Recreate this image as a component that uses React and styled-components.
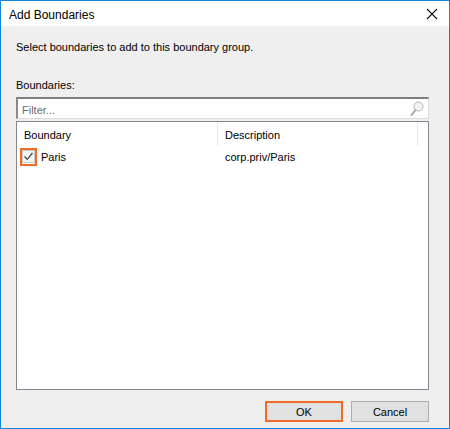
import React, { useState } from "react";
import styled, { createGlobalStyle } from "styled-components";

const GlobalStyle = createGlobalStyle`
  html, body {
    margin: 0;
    padding: 0;
    background: #ffffff;
  }
  * {
    box-sizing: border-box;
  }
`;

const Window = styled.div`
  width: 450px;
  height: 429px;
  border: 1px solid #1883d7;
  display: flex;
  flex-direction: column;
  background: #efefef;
  font-family: "Liberation Sans", Arial, sans-serif;
  font-size: 11px;
  color: #000;
`;

const TitleBar = styled.div`
  height: 30px;
  background: #ffffff;
  display: flex;
  align-items: center;
  justify-content: space-between;
  padding: 0 11px 0 8px;
`;

const Title = styled.span`
  font-size: 12px;
  padding-top: 3px;
`;

const CloseButton = styled.button`
  border: none;
  background: none;
  padding: 0;
  width: 12px;
  height: 12px;
  display: flex;
  cursor: pointer;
`;

const Body = styled.div`
  flex: 1;
  display: flex;
  flex-direction: column;
  padding: 15px 20px 6px 15px;
`;

const Instruction = styled.div`
  height: 13px;
  line-height: 13px;
`;

const FieldLabel = styled.div`
  margin-top: 25px;
  height: 13px;
  line-height: 13px;
`;

const FilterBox = styled.div`
  margin-top: 5px;
  height: 22px;
  background: #ffffff;
  border-top: 2px solid #7f7f7f;
  border-left: 2px solid #8a8a8a;
  border-right: 1px solid #dcdcdc;
  border-bottom: 1px solid #dcdcdc;
  display: flex;
  align-items: center;
  padding: 1px 4px 0 4px;
`;

const FilterInput = styled.input`
  flex: 1;
  border: none;
  outline: none;
  background: transparent;
  font-family: "Liberation Sans", Arial, sans-serif;
  font-size: 11px;
  padding: 1px 0 0;
  color: #000;
  &::placeholder {
    color: #6d6d6d;
  }
`;

const ListView = styled.div`
  margin-top: 2px;
  height: 269px;
  background: #ffffff;
  border: 1px solid #828790;
  display: flex;
  flex-direction: column;
`;

const HeaderRow = styled.div`
  display: grid;
  grid-template-columns: 201px 200px 1fr;
  height: 24px;
`;

const HeaderCell = styled.div`
  display: flex;
  align-items: center;
  padding-left: 7px;
  border-right: ${(p) => (p.$last ? "none" : "1px solid #e5e5e5")};
  margin: 1px 0 0;
`;

const Row = styled.div`
  display: grid;
  grid-template-columns: 201px 1fr;
  height: 19px;
  margin-top: 1px;
`;

const Cell = styled.div`
  display: flex;
  align-items: center;
  gap: 4px;
  padding-left: ${(p) => p.$pad}px;
`;

const CheckFrame = styled.span`
  width: 17px;
  height: 18px;
  border: 2px solid #f26b24;
  display: flex;
  align-items: center;
  justify-content: center;
  background: #ffffff;
`;

const CheckBox = styled.span`
  width: 13px;
  height: 13px;
  border: 1px solid #c9c9c9;
  background: #f5f5f5;
  display: flex;
  align-items: center;
  justify-content: center;
`;

const Footer = styled.div`
  margin-top: 11px;
  display: flex;
  justify-content: flex-end;
  gap: 8px;
`;

const Button = styled.button`
  width: 78px;
  height: 21px;
  background: #e1e1e1;
  border: ${(p) => (p.$focused ? "2px solid #f26b24" : "1px solid #adadad")};
  font-family: "Liberation Sans", Arial, sans-serif;
  font-size: 11px;
  color: #000;
  padding: 0;
  cursor: pointer;
`;

const rows = [{ name: "Paris", description: "corp.priv/Paris", checked: true }];

export default function App() {
  const [filter, setFilter] = useState("");
  const [items, setItems] = useState(rows);

  const toggle = (i) =>
    setItems((prev) =>
      prev.map((r, idx) => (idx === i ? { ...r, checked: !r.checked } : r))
    );

  return (
    <>
      <GlobalStyle />
      <Window>
        <TitleBar>
          <Title>Add Boundaries</Title>
          <CloseButton aria-label="Close">
            <svg width="12" height="12" viewBox="0 0 12 12">
              <path d="M1 1 L11 11 M11 1 L1 11" stroke="#111" strokeWidth="1.1" />
            </svg>
          </CloseButton>
        </TitleBar>
        <Body>
          <Instruction>Select boundaries to add to this boundary group.</Instruction>
          <FieldLabel>Boundaries:</FieldLabel>
          <FilterBox>
            <FilterInput
              placeholder="Filter..."
              value={filter}
              onChange={(e) => setFilter(e.target.value)}
            />
            <svg width="14" height="16" viewBox="0 0 14 16">
              <circle cx="8.5" cy="5.5" r="4.5" fill="#f4f4f4" stroke="#b5b5b5" strokeWidth="1" />
              <path d="M5.5 9 L1.5 14" stroke="#a8a8a8" strokeWidth="2" strokeLinecap="round" />
            </svg>
          </FilterBox>
          <ListView>
            <HeaderRow>
              <HeaderCell>Boundary</HeaderCell>
              <HeaderCell>Description</HeaderCell>
              <HeaderCell $last />
            </HeaderRow>
            {items
              .filter((r) => r.name.toLowerCase().includes(filter.toLowerCase()))
              .map((r, i) => (
                <Row key={r.name}>
                  <Cell $pad={3} onClick={() => toggle(i)}>
                    <CheckFrame>
                      <CheckBox>
                        {r.checked && (
                          <svg width="11" height="11" viewBox="0 0 11 11">
                            <path
                              d="M1.5 5.5 L4.2 8.3 L9.5 2"
                              fill="none"
                              stroke="#4a4a4a"
                              strokeWidth="1.3"
                            />
                          </svg>
                        )}
                      </CheckBox>
                    </CheckFrame>
                    <span>{r.name}</span>
                  </Cell>
                  <Cell $pad={7}>{r.description}</Cell>
                </Row>
              ))}
          </ListView>
          <Footer>
            <Button $focused>OK</Button>
            <Button>Cancel</Button>
          </Footer>
        </Body>
      </Window>
    </>
  );
}
